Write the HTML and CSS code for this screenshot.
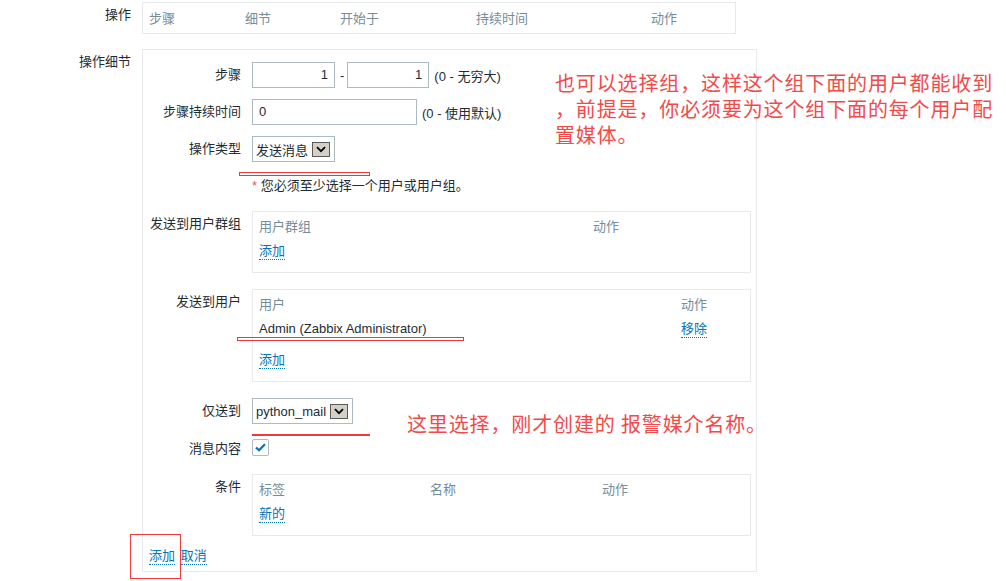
FILE: index.html
```html
<!DOCTYPE html>
<html lang="zh-CN">
<head>
<meta charset="utf-8">
<title>操作细节</title>
<link rel="stylesheet" href="styles.css">
</head>
<body>
<div class="form">
  <div class="frow">
    <div class="flabel">操作</div>
    <div class="tbox ops-box">
      <div class="grid cols-ops">
        <span class="th">步骤</span><span class="th">细节</span><span class="th">开始于</span><span class="th">持续时间</span><span class="th">动作</span>
      </div>
    </div>
  </div>

  <div class="frow details-row">
    <div class="flabel">操作细节</div>
    <div class="details">
      <div class="irows">
        <div class="irow">
          <div class="ilabel">步骤</div>
          <div class="ictl">
            <span class="input num w83">1</span><span class="dash">-</span><span class="input num w82">1</span><span class="hint">(0 - 无穷大)</span>
          </div>
        </div>
        <div class="irow">
          <div class="ilabel">步骤持续时间</div>
          <div class="ictl">
            <span class="input w165">0</span><span class="hint">(0 - 使用默认)</span>
          </div>
        </div>
        <div class="irow">
          <div class="ilabel">操作类型</div>
          <div class="ictl">
            <span class="select w83">发送消息<span class="sbtn"><svg width="10" height="7" viewBox="0 0 10 7"><path d="M1 1.2 L5 5.2 L9 1.2" fill="none" stroke="#000" stroke-width="1.8"/></svg></span></span>
          </div>
        </div>
        <div class="irow sp5">
          <div class="ilabel"></div>
          <div class="ictl err"><span class="errtext"><span class="star">*</span> 您必须至少选择一个用户或用户组。</span></div>
        </div>
        <div class="irow sp6">
          <div class="ilabel">发送到用户群组</div>
          <div class="tbox sub">
            <div class="grid cols-g">
              <span class="th">用户群组</span><span class="th">动作</span>
            </div>
            <div class="trow"><a class="link">添加</a></div>
          </div>
        </div>
        <div class="irow sp5">
          <div class="ilabel">发送到用户</div>
          <div class="tbox sub">
            <div class="grid cols-u">
              <span class="th">用户</span><span class="th">动作</span>
              <span class="td">Admin (Zabbix Administrator)</span><span class="td"><a class="link">移除</a></span>
            </div>
            <div class="trow addrow"><a class="link">添加</a></div>
          </div>
        </div>
        <div class="irow sp5">
          <div class="ilabel">仅送到</div>
          <div class="ictl">
            <span class="select w101">python_mail<span class="sbtn"><svg width="10" height="7" viewBox="0 0 10 7"><path d="M1 1.2 L5 5.2 L9 1.2" fill="none" stroke="#000" stroke-width="1.8"/></svg></span></span>
          </div>
        </div>
        <div class="irow sp4 cbrow">
          <div class="ilabel">消息内容</div>
          <div class="ictl">
            <span class="checkbox"><svg width="13" height="11" viewBox="0 0 13 11"><path d="M2 5.5 L5 8.3 L11 2.2" fill="none" stroke="#0275b8" stroke-width="2.2"/></svg></span>
          </div>
        </div>
        <div class="irow sp6">
          <div class="ilabel">条件</div>
          <div class="tbox sub">
            <div class="grid cols-c">
              <span class="th">标签</span><span class="th">名称</span><span class="th">动作</span>
            </div>
            <div class="trow"><a class="link">新的</a></div>
          </div>
        </div>
      </div>
      <div class="buttons"><a class="link">添加</a> <a class="link">取消</a></div>
    </div>
  </div>
</div>

<div class="mark rect1"></div>
<div class="mark rect2"></div>
<div class="mark line3"></div>
<div class="mark rect4"></div>

<div class="note note1">
  <span class="nl">也可以选择组，这样这个组下面的用户都能收到</span>
  <span class="nl">，前提是，你必须要为这个组下面的每个用户配</span>
  <span class="nl">置媒体。</span>
</div>
<div class="note note2"><span class="nl">这里选择，刚才创建的 报警媒介名称。</span></div>
</body>
</html>
```

FILE: styles.css
```css
html, body {
  margin: 0;
  padding: 0;
  background: #fff;
}
body {
  position: relative;
  width: 1006px;
  height: 581px;
  overflow: hidden;
  font-family: "Liberation Sans", Arial, "Noto Sans CJK SC", sans-serif;
  font-size: 13px;
  color: #1f2c33;
}
.form {
  padding-top: 2px;
}
.frow {
  display: grid;
  grid-template-columns: 131px auto;
  column-gap: 11px;
  align-items: start;
}
.details-row {
  margin-top: 15px;
}
.flabel {
  text-align: right;
  padding-top: 5px;
  line-height: 16px;
}
.tbox {
  border: 1px solid #e6eaec;
  padding: 3px 6px 9px;
  box-sizing: border-box;
}
.ops-box {
  width: 594px;
  height: 32px;
  padding: 4px 6px 2px;
}
.grid {
  display: grid;
  line-height: 24px;
}
.cols-ops { grid-template-columns: 96px 95px 136px 175px 1fr; }
.cols-g { grid-template-columns: 334px 1fr; }
.cols-u { grid-template-columns: 422px 1fr; }
.cols-c { grid-template-columns: 171px 172px 1fr; }
.th {
  color: #768d99;
  white-space: nowrap;
}
.td { white-space: nowrap; }
.trow { line-height: 24px; }
.addrow { padding-top: 7px; }

.details {
  width: 615px;
  box-sizing: border-box;
  border: 1px solid #e6eaec;
  padding: 12px 0 7px 0;
}
.irows {
  display: flex;
  flex-direction: column;
  row-gap: 11px;
}
.irow {
  display: grid;
  grid-template-columns: 98px auto;
  column-gap: 11px;
  align-items: start;
}
.sp4 { margin-top: 4px; }
.sp5 { margin-top: 5px; }
.sp6 { margin-top: 6px; }
.ilabel {
  text-align: right;
  padding-top: 5px;
  line-height: 16px;
  white-space: nowrap;
}
.cbrow .ilabel { padding-top: 2px; }
.ictl {
  display: flex;
  align-items: center;
  min-height: 16px;
}
.input {
  display: inline-block;
  box-sizing: border-box;
  height: 26px;
  line-height: 24px;
  border: 1px solid #acbbc2;
  padding: 0 6px;
  background: #fff;
}
.num { text-align: right; }
.w83 { width: 83px; }
.w82 { width: 82px; }
.w165 { width: 165px; }
.w101 { width: 101px; }
.dash { margin: 0 3px 0 5px; }
.hint { margin-left: 5px; white-space: nowrap; }
.select {
  display: inline-flex;
  align-items: center;
  box-sizing: border-box;
  height: 26px;
  border: 1px solid #acbbc2;
  padding: 0 4px 0 3px;
  justify-content: space-between;
  white-space: nowrap;
}
.sbtn {
  display: inline-flex;
  align-items: center;
  justify-content: center;
  width: 18px;
  height: 15px;
  box-sizing: border-box;
  background: #d4d0c8;
  border: 1px solid #5a5a5a;
  margin-left: 3px;
}
.err {
  line-height: 16px;
  white-space: nowrap;
}
.errtext { white-space: pre; }
.star { color: #e45959; }
.sub { width: 499px; }
.checkbox {
  display: inline-flex;
  align-items: center;
  justify-content: center;
  width: 17px;
  height: 17px;
  box-sizing: border-box;
  border: 1px solid #acbbc2;
  border-radius: 2px;
  background: #fff;
}
.link {
  color: #0275b8;
  border-bottom: 1px dotted #0275b8;
  padding-bottom: 1px;
  text-decoration: none;
  cursor: pointer;
}
.buttons {
  margin-top: 12px;
  padding-left: 6px;
  line-height: 16px;
}
.buttons .link + .link { margin-left: 2px; }

.mark {
  position: absolute;
  box-sizing: border-box;
}
.rect1 {
  left: 239px; top: 172px; width: 131px; height: 4px;
  border: 1px solid #e83a3a;
}
.rect2 {
  left: 237px; top: 337px; width: 227px; height: 4px;
  border: 1px solid #e83a3a;
}
.line3 {
  left: 252px; top: 434px; width: 118px; height: 2px;
  background: #ee3a3a;
}
.rect4 {
  left: 130px; top: 534px; width: 51px; height: 45px;
  border: 1px solid #ee3a3a;
}
.note {
  position: absolute;
  font-family: "Noto Sans CJK SC", sans-serif;
  font-size: 20px;
  letter-spacing: 0.86px;
  line-height: 26px;
  color: #f24a4a;
  white-space: nowrap;
}
.nl { display: block; }
.note1 { left: 555px; top: 70px; }
.note2 { left: 407px; top: 411px; }
```
